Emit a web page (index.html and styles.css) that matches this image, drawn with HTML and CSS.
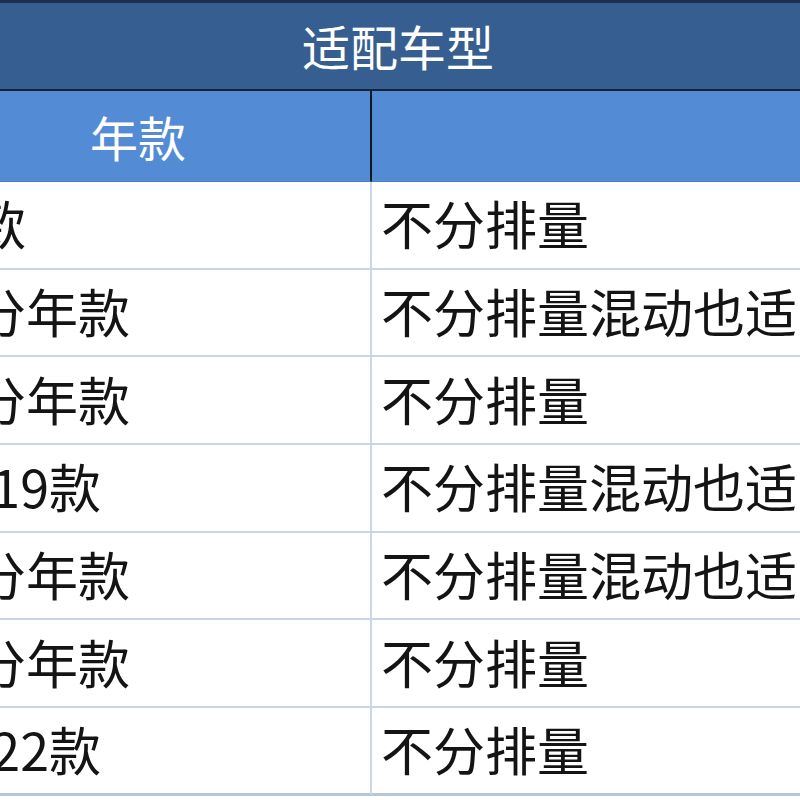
FILE: index.html
```html
<!DOCTYPE html>
<html lang="zh-CN">
<head>
<meta charset="utf-8">
<title>适配车型</title>
<link rel="stylesheet" href="styles.css">
</head>
<body>
<div class="sheet">
  <div class="title">适配车型</div>
  <div class="sub sub-left">年款</div>
  <div class="sub sub-right"></div>

  <div class="cell left">全款</div>
  <div class="cell right"><span class="txt">不分排量</span></div>

  <div class="cell left">不分年款</div>
  <div class="cell right"><span class="txt">不分排量混动也适用</span></div>

  <div class="cell left">不分年款</div>
  <div class="cell right"><span class="txt">不分排量</span></div>

  <div class="cell left">&nbsp;2019款</div>
  <div class="cell right"><span class="txt">不分排量混动也适用</span></div>

  <div class="cell left">不分年款</div>
  <div class="cell right"><span class="txt">不分排量混动也适用</span></div>

  <div class="cell left">不分年款</div>
  <div class="cell right"><span class="txt">不分排量</span></div>

  <div class="cell left last">&nbsp;2022款</div>
  <div class="cell right last"><span class="txt">不分排量</span></div>
</div>
</body>
</html>
```

FILE: styles.css
```css
html, body {
  margin: 0;
  padding: 0;
  background: #ffffff;
  overflow: hidden;
  width: 800px;
  height: 800px;
}

.sheet {
  display: grid;
  grid-template-columns: 466px 518px;
  width: 984px;
  margin-left: -94px;
  font-family: "Noto Sans CJK SC", "Noto Sans", sans-serif;
  color: #141414;
}

.title {
  grid-column: 1 / -1;
  box-sizing: border-box;
  height: 91px;
  border-top: 3px solid #1d2f4a;
  border-bottom: 2px solid #14233a;
  background: #365e90;
  color: #ffffff;
  font-size: 48px;
  display: flex;
  align-items: center;
  justify-content: center;
  padding-bottom: 2px;
}

.sub {
  box-sizing: border-box;
  height: 91px;
  background: #538bd4;
  color: #ffffff;
  font-size: 48px;
  display: flex;
  align-items: center;
  justify-content: center;
  border-bottom: 1px solid #4a7fc4;
}

.sub-left {
  border-right: 2px solid #101820;
}

.cell {
  box-sizing: border-box;
  height: 87.7px;
  border-bottom: 2px solid #cbd4e7;
  font-size: 52px;
  display: flex;
  align-items: center;
  white-space: pre;
  overflow: hidden;
  padding-bottom: 4px;
}

.left {
  border-right: 2px solid #cdd6e8;
  padding-left: 16px;
}

.right {
  padding-left: 9px;
}

.txt {
  display: block;
  max-width: 416px;
  overflow: hidden;
}

.last {
  border-bottom: 3px solid #b9c4db;
}
```
